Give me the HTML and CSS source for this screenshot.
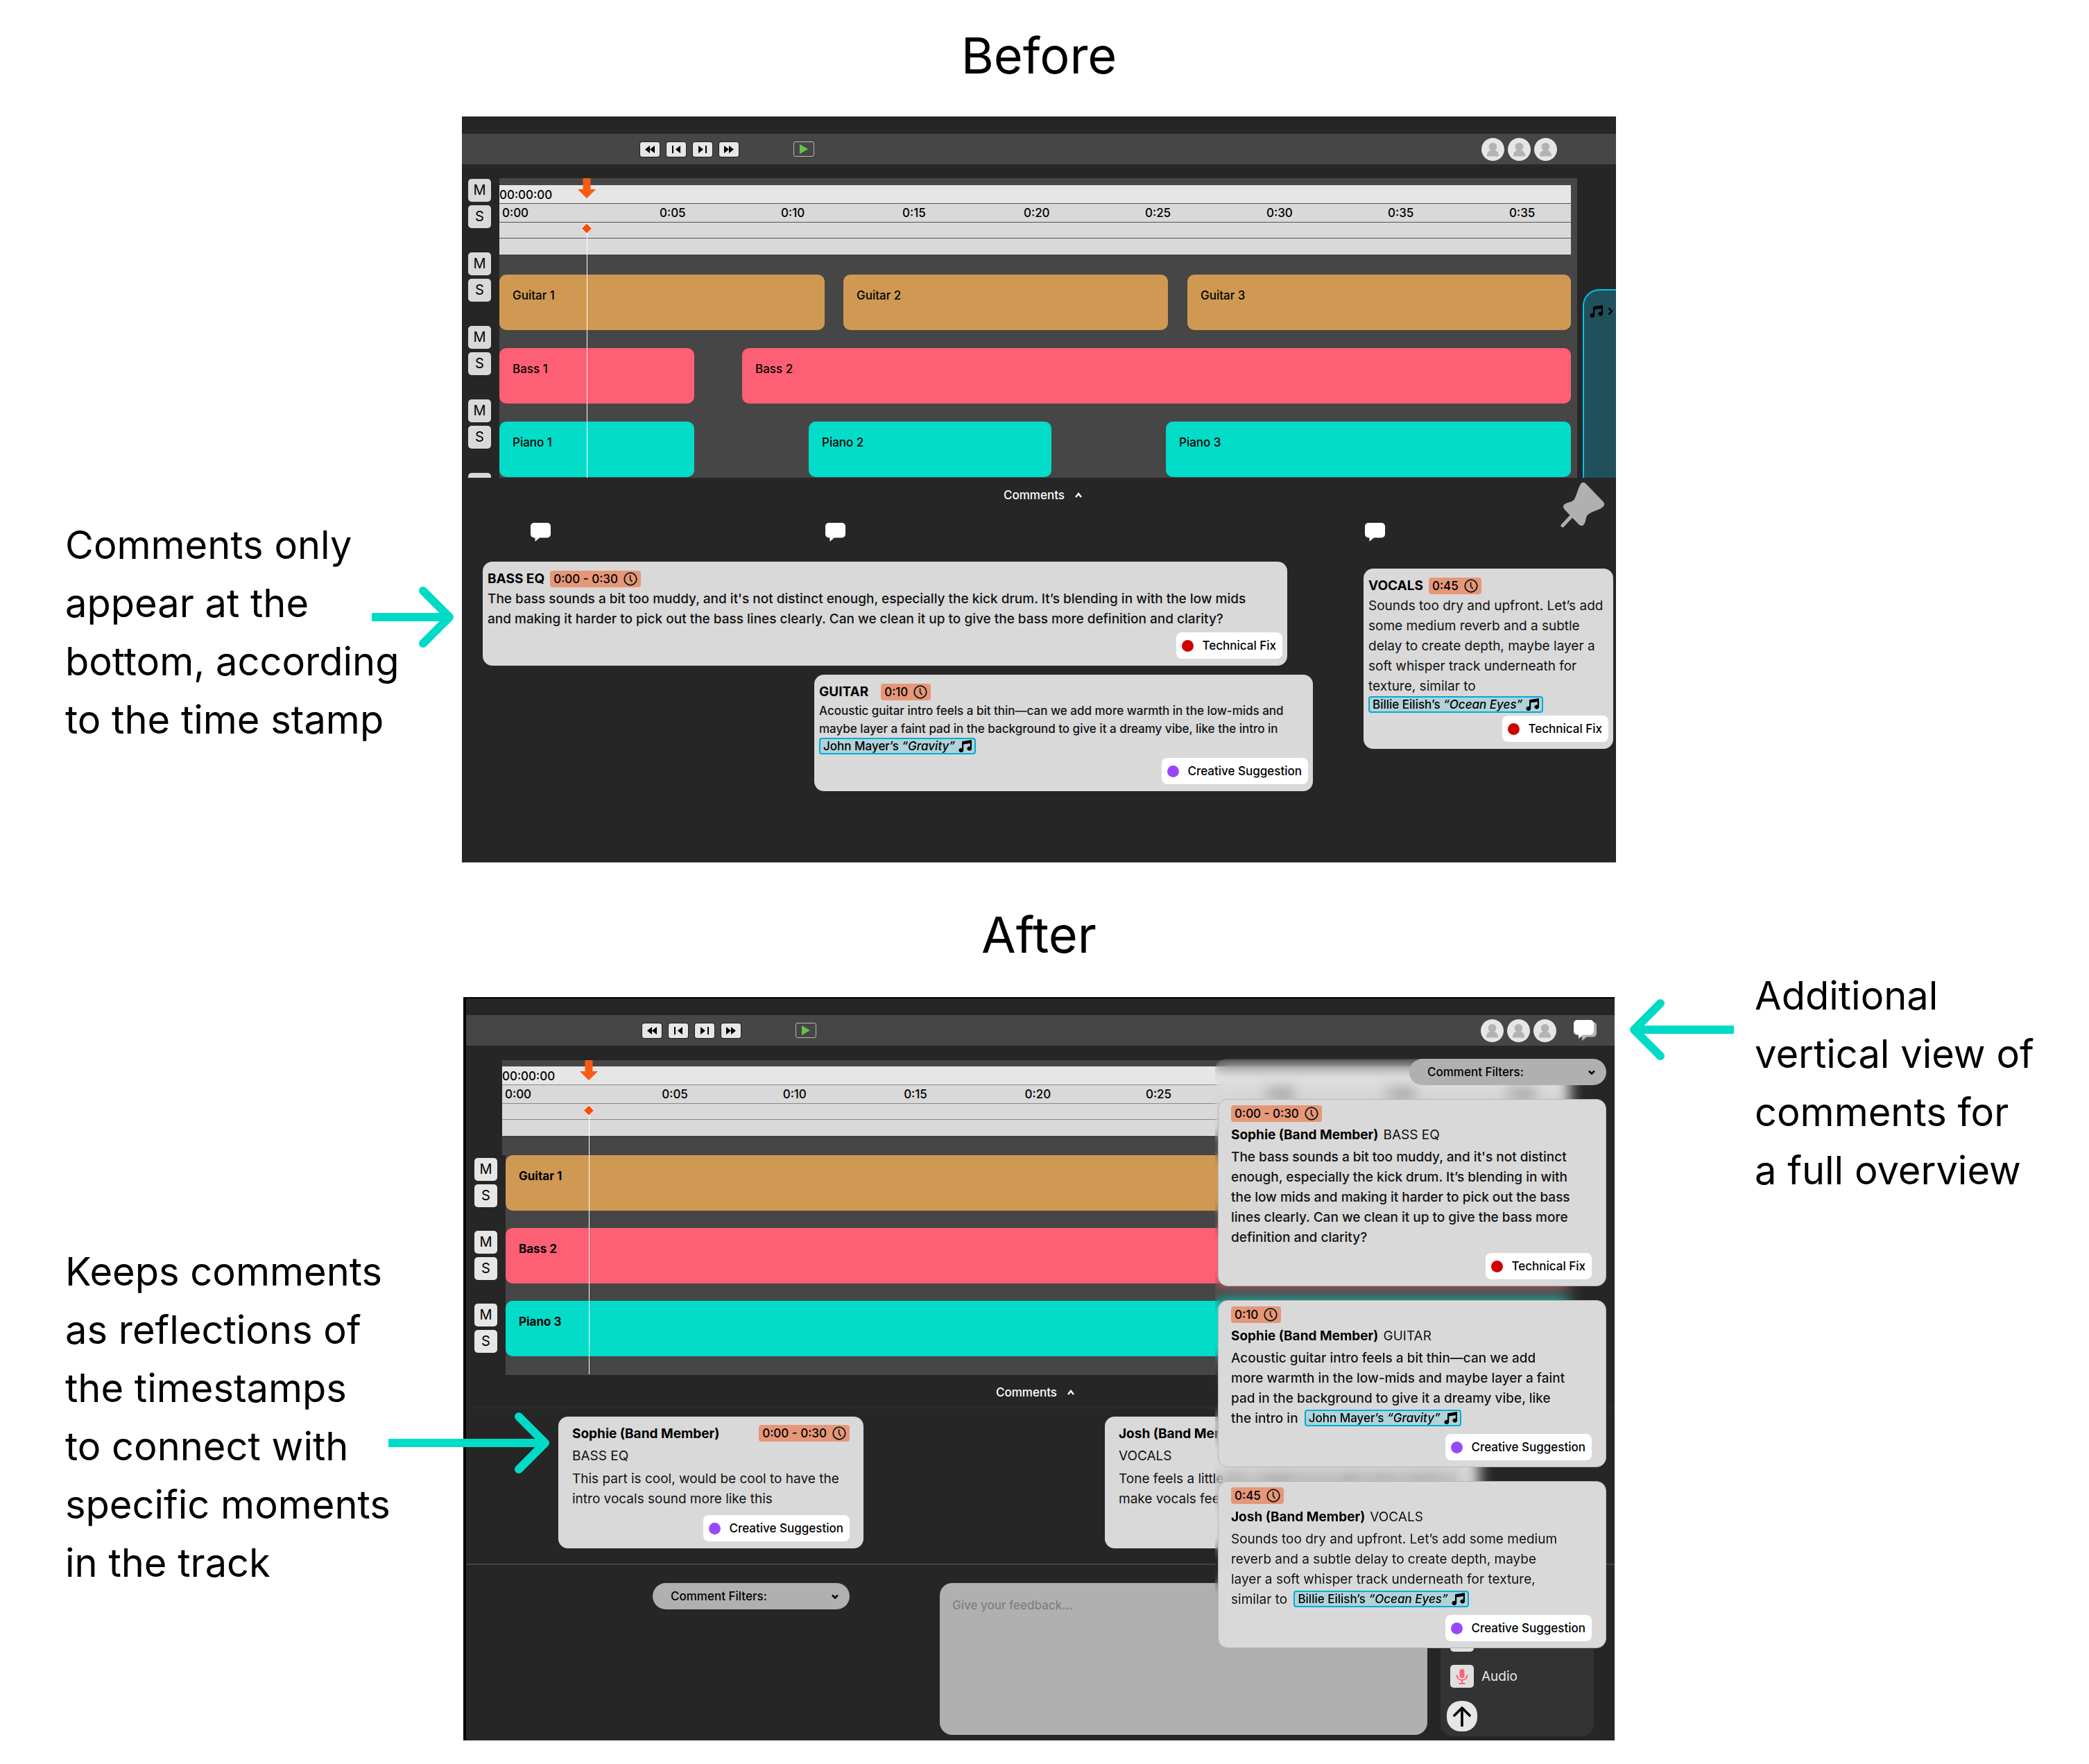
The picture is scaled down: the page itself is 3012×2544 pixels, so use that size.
FILE: index.html
```html
<!DOCTYPE html>
<html lang="en">
<head>
<meta charset="utf-8">
<meta name="viewport" content="width=device-width, initial-scale=1">
<title>Comments: before and after</title>
<link rel="stylesheet" href="styles.css">
</head>
<body>
<svg class="defs" aria-hidden="true">
  <symbol id="i-rewind" viewBox="0 0 28 21"><path d="M14 5v11L7 10.500zM21 5v11l-7-5.500z"/></symbol>
  <symbol id="i-prev" viewBox="0 0 28 21"><path d="M8 5h2v11H8zM20 5v11l-7-5.500z"/></symbol>
  <symbol id="i-next" viewBox="0 0 28 21"><path d="M18 5h2v11h-2zM8 5v11l7-5.500z"/></symbol>
  <symbol id="i-forward" viewBox="0 0 28 21"><path d="M7 5v11l7-5.500zM14 5v11l7-5.500z"/></symbol>
  <symbol id="i-play" viewBox="0 0 14 16"><path d="M1 1v14l12-7z"/></symbol>
  <symbol id="i-user" viewBox="0 0 33 33"><circle cx="16.500" cy="16.500" r="16.500" fill="#e6e6e6"/><path d="M16.500 7c3.400 0 5.800 2.400 5.800 5.600 0 2.400-.9 4.200-2.500 5.300 3.200.8 5.400 3.600 5.400 8.600H7.800c0-5 2.200-7.800 5.400-8.600-1.600-1.100-2.500-2.900-2.500-5.300C10.700 9.400 13.100 7 16.500 7z" fill="#b3b3b3"/></symbol>
  <symbol id="i-clock" viewBox="0 0 20 20"><circle cx="10" cy="10" r="8.800" fill="none" stroke="#111" stroke-width="1.800"/><path d="M9.600 4.500v6l3 3.600" fill="none" stroke="#111" stroke-width="1.700"/></symbol>
  <symbol id="i-note" viewBox="0 0 20 18"><path d="M6 2.200 20 0v12.600a3.300 3 0 1 1-2.200-2.800V4.900L8.200 6.400v8.400A3.400 3.100 0 1 1 6 12z"/></symbol>
  <symbol id="i-up" viewBox="0 0 12 10"><path d="M2 8l4-5 4 5" fill="none" stroke="currentColor" stroke-width="2.400"/></symbol>
  <symbol id="i-down" viewBox="0 0 12 10"><path d="M2 2.500l4 4 4-4" fill="none" stroke="currentColor" stroke-width="2.600"/></symbol>
  <symbol id="i-bubble" viewBox="0 0 29 27"><path d="M5 0h19a5 5 0 0 1 5 5v11.500a5 5 0 0 1-5 5H13L6.500 27v-5.500H5a5 5 0 0 1-5-5V5a5 5 0 0 1 5-5z"/></symbol>
  <symbol id="i-playhead" viewBox="0 0 26 80"><path d="M7.500 0h11v16H26L13 29 0 16h7.500z" fill="#fa5a14"/><path d="M13 65l7.500 7.500L13 80l-7.500-7.500z" fill="#fa4d0c" stroke="#fff" stroke-width="1"/></symbol>
</svg>

<main>
<section class="stage stage-before">
  <div class="side left">
    <p class="note">Comments only<br>appear at the<br>bottom, according<br>to the time stamp</p>
    <svg class="arrow" viewBox="0 0 118 88" aria-hidden="true"><path d="M0 44h110"/><path class="head" d="M74 6l38 38-38 38"/></svg>
  </div>
  <h2>Before</h2>
  <div class="panel">
    <header class="toolbar">
      <div class="transport">
        <button aria-label="Rewind"><svg><use href="#i-rewind"/></svg></button>
        <button aria-label="Previous"><svg><use href="#i-prev"/></svg></button>
        <button aria-label="Next"><svg><use href="#i-next"/></svg></button>
        <button aria-label="Forward"><svg><use href="#i-forward"/></svg></button>
      </div>
      <button class="play" aria-label="Play"><svg><use href="#i-play"/></svg></button>
      <div class="people">
        <svg><use href="#i-user"/></svg><svg><use href="#i-user"/></svg><svg><use href="#i-user"/></svg>
      </div>
    </header>
    <div class="tracks">
      <div class="controls">
        <div class="ms"><button>M</button><button>S</button></div>
        <div class="ms"><button>M</button><button>S</button></div>
        <div class="ms"><button>M</button><button>S</button></div>
        <div class="ms"><button>M</button><button>S</button></div>
        <div class="ms"><button aria-label="Mute"></button></div>
      </div>
      <div class="timeline">
        <div class="ruler">
          <div class="position">00:00:00</div>
          <div class="marks"><span>0:00</span><span>0:05</span><span>0:10</span><span>0:15</span><span>0:20</span><span>0:25</span><span>0:30</span><span>0:35</span><span>0:35</span></div>
          <div class="strip"></div>
          <div class="strip"></div>
        </div>
        <div class="lanes">
          <div class="lane guitar" style="grid-template-columns:469fr 27fr 468fr 28fr 553fr"><div class="clip">Guitar 1</div><i></i><div class="clip">Guitar 2</div><i></i><div class="clip">Guitar 3</div></div>
          <div class="lane bass" style="grid-template-columns:281fr 69fr 1195fr"><div class="clip">Bass 1</div><i></i><div class="clip">Bass 2</div></div>
          <div class="lane piano" style="grid-template-columns:281fr 165fr 350fr 165fr 584fr"><div class="clip">Piano 1</div><i></i><div class="clip">Piano 2</div><i></i><div class="clip">Piano 3</div></div>
        </div>
        <div class="playhead"><svg><use href="#i-playhead"/></svg></div>
      </div>
      <button class="library" aria-label="Open references"><svg class="song-icon"><use href="#i-note"/></svg><svg class="chev" viewBox="0 0 8 12"><path d="M1.500 1.500L6 6l-4.500 4.500" fill="none" stroke="#000" stroke-width="2.400"/></svg></button>
    </div>
    <div class="comments">
      <button class="toggle">Comments <svg><use href="#i-up"/></svg></button>
      <svg class="pin" viewBox="0 0 64 66" aria-hidden="true"><path d="M29 3c2-3 5-3 8 0l24 25c3 3 3 6-1 9-5 4-18 6-22 12-2 4-1 8-4 12-2 3-5 3-8 0L6 40c-3-4-3-7 2-9 4-2 9-2 12-6 3-6 6-17 9-22z" fill="#b0b0b0"/><path d="M3 63l16-17" stroke="#b0b0b0" stroke-width="5" stroke-linecap="round"/></svg>
      <div class="bubbles"><svg><use href="#i-bubble"/></svg><svg><use href="#i-bubble"/></svg><svg><use href="#i-bubble"/></svg></div>
      <div class="board">
        <div class="board-main">
          <article class="card compact first">
            <div class="card-head"><b>BASS EQ</b><span class="time">0:00 - 0:30 <svg><use href="#i-clock"/></svg></span></div>
            <p class="strong">The bass sounds a bit too muddy, and it's not distinct enough, especially the kick drum. It’s blending in with the low mids<br>and making it harder to pick out the bass lines clearly. Can we clean it up to give the bass more definition and clarity?</p>
            <span class="kind technical">Technical Fix</span>
          </article>
          <article class="card compact second">
            <div class="card-head"><b>GUITAR</b><span class="time">0:10 <svg><use href="#i-clock"/></svg></span></div>
            <p class="strong small">Acoustic guitar intro feels a bit thin—can we add more warmth in the low-mids and<br>maybe layer a faint pad in the background to give it a dreamy vibe, like the intro in</p>
            <a class="song" href="#">John Mayer’s <em>“Gravity”</em> <svg><use href="#i-note"/></svg></a>
            <span class="kind creative">Creative Suggestion</span>
          </article>
        </div>
        <article class="card compact third">
          <div class="card-head"><b>VOCALS</b><span class="time">0:45 <svg><use href="#i-clock"/></svg></span></div>
          <p>Sounds too dry and upfront. Let’s add<br>some medium reverb and a subtle<br>delay to create depth, maybe layer a<br>soft whisper track underneath for<br>texture, similar to</p>
          <a class="song" href="#">Billie Eilish’s <em>“Ocean Eyes”</em> <svg><use href="#i-note"/></svg></a>
          <span class="kind technical">Technical Fix</span>
        </article>
      </div>
    </div>
  </div>
</section>

<section class="stage stage-after">
  <div class="side left">
    <p class="note">Keeps comments<br>as reflections of<br>the timestamps<br>to connect with<br>specific moments<br>in the track</p>
    <svg class="arrow" viewBox="0 0 232 88" aria-hidden="true"><path d="M0 44h224"/><path class="head" d="M188 6l38 38-38 38"/></svg>
  </div>
  <h2>After</h2>
  <div class="panel">
    <header class="toolbar">
      <div class="transport">
        <button aria-label="Rewind"><svg><use href="#i-rewind"/></svg></button>
        <button aria-label="Previous"><svg><use href="#i-prev"/></svg></button>
        <button aria-label="Next"><svg><use href="#i-next"/></svg></button>
        <button aria-label="Forward"><svg><use href="#i-forward"/></svg></button>
      </div>
      <button class="play" aria-label="Play"><svg><use href="#i-play"/></svg></button>
      <div class="people">
        <svg><use href="#i-user"/></svg><svg><use href="#i-user"/></svg><svg><use href="#i-user"/></svg>
      </div>
      <button class="chat" aria-label="Show all comments"><svg viewBox="0 0 33 30"><path d="M9 3h19a5 5 0 0 1 5 5v11.500a5 5 0 0 1-5 5h-9L12 30v-5.500H9z" fill="#b3b3b3"/><path d="M5 0h19a5 5 0 0 1 5 5v11.500a5 5 0 0 1-5 5H13L7 27v-5.500H5a5 5 0 0 1-5-5V5a5 5 0 0 1 5-5z" fill="#fff"/></svg></button>
    </header>
    <div class="tracks">
      <div class="controls">
        <div class="ms"><button>M</button><button>S</button></div>
        <div class="ms"><button>M</button><button>S</button></div>
        <div class="ms"><button>M</button><button>S</button></div>
      </div>
      <div class="timeline">
        <div class="ruler">
          <div class="position">00:00:00</div>
          <div class="marks"><span>0:00</span><span>0:05</span><span>0:10</span><span>0:15</span><span>0:20</span><span>0:25</span><span>0:30</span><span>0:35</span><span>0:35</span></div>
          <div class="strip"></div>
          <div class="strip"></div>
        </div>
        <div class="lanes">
          <div class="lane guitar"><div class="clip">Guitar 1</div></div>
          <div class="lane bass"><div class="clip">Bass 2</div></div>
          <div class="lane piano"><div class="clip">Piano 3</div></div>
        </div>
        <div class="playhead"><svg><use href="#i-playhead"/></svg></div>
      </div>
    </div>
    <div class="comments">
      <button class="toggle">Comments <svg><use href="#i-up"/></svg></button>
      <div class="reflections">
        <article class="card roomy">
          <div class="card-head"><b>Sophie (Band Member)</b><span class="time">0:00 - 0:30 <svg><use href="#i-clock"/></svg></span></div>
          <div class="topic">BASS EQ</div>
          <p>This part is cool, would be cool to have the<br>intro vocals sound more like this</p>
          <span class="kind creative">Creative Suggestion</span>
        </article>
        <article class="card roomy wide">
          <div class="card-head"><b>Josh (Band Member)</b></div>
          <div class="topic">VOCALS</div>
          <p>Tone feels a little dry, maybe try to add some reverb to<br>make vocals feel fuller</p>
        </article>
      </div>
    </div>
    <form class="composer">
      <div class="filter"><select aria-label="Comment filters"><option>Comment Filters:</option></select><svg><use href="#i-down"/></svg></div>
      <textarea aria-label="Feedback" placeholder="Give your feedback..."></textarea>
      <div class="tools">
        <button type="button" class="tool" aria-label="Attach"><span class="tile"></span></button>
        <button type="button" class="tool"><span class="tile"><svg viewBox="0 0 18 22"><rect x="5.500" y="0" width="7" height="13" rx="3.500" fill="#fd5f74"/><path d="M1.500 8.500c0 10 15 10 15 0M9 16v4M4.500 21h9" fill="none" stroke="#fd5f74" stroke-width="2"/></svg></span>Audio</button>
        <button type="button" class="send" aria-label="Send"><svg viewBox="0 0 28 30"><path d="M14 29V3M3 14L14 3l11 11" fill="none" stroke="#000" stroke-width="3.600" stroke-linecap="round" stroke-linejoin="round"/></svg></button>
      </div>
    </form>
    <aside class="overview">
      <div class="filter"><select aria-label="Comment filters"><option>Comment Filters:</option></select><svg><use href="#i-down"/></svg></div>
      <article class="card listed">
        <span class="time">0:00 - 0:30 <svg><use href="#i-clock"/></svg></span>
        <div class="card-head"><b>Sophie (Band Member)</b> BASS EQ</div>
        <p class="strong">The bass sounds a bit too muddy, and it's not distinct<br>enough, especially the kick drum. It’s blending in with<br>the low mids and making it harder to pick out the bass<br>lines clearly. Can we clean it up to give the bass more<br>definition and clarity?</p>
        <span class="kind technical">Technical Fix</span>
      </article>
      <article class="card listed">
        <span class="time">0:10 <svg><use href="#i-clock"/></svg></span>
        <div class="card-head"><b>Sophie (Band Member)</b> GUITAR</div>
        <p class="strong">Acoustic guitar intro feels a bit thin—can we add<br>more warmth in the low-mids and maybe layer a faint<br>pad in the background to give it a dreamy vibe, like<br>the intro in <a class="song" href="#">John Mayer’s <em>“Gravity”</em> <svg><use href="#i-note"/></svg></a></p>
        <span class="kind creative">Creative Suggestion</span>
      </article>
      <article class="card listed">
        <span class="time">0:45 <svg><use href="#i-clock"/></svg></span>
        <div class="card-head"><b>Josh (Band Member)</b> VOCALS</div>
        <p>Sounds too dry and upfront. Let’s add some medium<br>reverb and a subtle delay to create depth, maybe<br>layer a soft whisper track underneath for texture,<br>similar to <a class="song" href="#">Billie Eilish’s <em>“Ocean Eyes”</em> <svg><use href="#i-note"/></svg></a></p>
        <span class="kind creative">Creative Suggestion</span>
      </article>
    </aside>
  </div>
  <div class="side right">
    <svg class="arrow" viewBox="0 0 150 88" aria-hidden="true"><path d="M150 44H8"/><path class="head" d="M44 6L6 44l38 38"/></svg>
    <p class="note">Additional<br>vertical view of<br>comments for<br>a full overview</p>
  </div>
</section>
</main>
</body>
</html>
```
FILE: styles.css
```css
* { box-sizing: border-box; }
body {
  margin: 0;
  background: #fff;
  color: #000;
  font-family: Inter, "Liberation Sans", sans-serif;
  font-size: 17px;
  line-height: 24px;
}
button, select, textarea { font: inherit; color: inherit; margin: 0; border: 0; padding: 0; }
svg { display: block; flex: none; }
p, h2 { margin: 0; }
.defs { position: absolute; width: 0; height: 0; }

/* Page: note | panel | note */
.stage { display: grid; grid-template-rows: auto auto; }
.stage-before { grid-template-columns: 666fr 1664fr 682fr; }
.stage-after { grid-template-columns: 668fr 1660fr 684fr; }
.stage h2 {
  grid-area: 1 / 2;
  padding: 38px 0 46px;
  text-align: center;
  font-size: 72px;
  line-height: 84px;
  font-weight: 400;
}
.stage-after h2 { padding: 62px 0 48px; }
.stage .panel { grid-area: 2 / 2; min-width: 0; }
.side { position: relative; z-index: 1; font-size: 56px; line-height: 84px; white-space: nowrap; }
.side.left { grid-area: 1 / 1 / 3 / 2; padding-left: 94px; }
.side.right { grid-area: 1 / 3 / 3 / 4; padding: 150px 0 0 202px; }
.stage-before .left { padding-top: 744px; }
.stage-after .left { padding-top: 548px; }
.arrow {
  position: absolute;
  height: 88px;
  fill: none;
  stroke: #00dbc7;
  stroke-width: 12px;
  stroke-linejoin: round;
}
.arrow .head { stroke-linecap: round; }
.stage-before .arrow { right: 12px; top: 846px; width: 118px; }
.stage-after .left .arrow { right: -124px; top: 793px; width: 232px; }
.right .arrow { left: 22px; top: 197px; width: 150px; }

/* Panel frame */
.panel {
  position: relative;
  display: flex;
  flex-direction: column;
  background: #262626;
  padding-top: 25px;
  overflow: hidden;
  font-weight: 500;
  font-optical-sizing: none;
}
.stage-before .panel { border-bottom: 1px solid #555; }
.stage-after .panel { border-left: 4px solid #000; border-top: 2px solid #000; padding-top: 24px; }

/* Toolbar */
.toolbar { display: flex; align-items: center; height: 44px; background: #464646; padding: 0 85px 0 257px; }
.stage-after .toolbar { padding: 0 26px 0 254px; }
.transport { display: flex; gap: 10px; }
.transport button { width: 28px; height: 21px; background: #e6e6e6; border-radius: 3px; box-shadow: 0 0 0 1px #222; }
.transport svg { width: 28px; height: 21px; }
.play { display: grid; place-items: center; width: 30px; height: 22px; margin-left: 79px; background: none; border: 1px solid #b8b8b8; border-radius: 3px; }
.play svg { width: 14px; height: 16px; fill: #6cc04a; }
.people { display: flex; gap: 5px; margin-left: auto; }
.people svg { width: 33px; height: 33px; }
.chat { margin-left: 25px; background: none; }
.chat svg { width: 33px; height: 30px; }

/* Tracks */
.tracks { display: grid; grid-template-columns: 54px 1fr 56px; height: 452px; padding-top: 20px; overflow: hidden; }
.stage-after .tracks { grid-template-columns: 52px 1fr; height: 475px; padding: 21px 64px 0 0; }
.controls { display: flex; flex-direction: column; gap: 35px; padding: 1px 0 0 9px; }
.stage-after .controls { gap: 34px; padding: 141px 0 0 12px; }
.ms { display: flex; flex-direction: column; gap: 5px; }
.ms button { width: 33px; height: 33px; background: #d9d9d9; border-radius: 5px; font-size: 20px; font-weight: 400; line-height: 33px; text-align: center; }
.stage-after .ms button { background: #e6e6e6; }
.timeline { position: relative; background: #464646; padding: 10px 9px 0 0; height: 432px; }
.stage-after .timeline { padding: 9px 0 0; height: 454px; border-bottom: 1px solid #48487c; }
.ruler { background: #d9d9d9; border-bottom: 1px solid #eee; }
.ruler > div + div { border-top: 1px solid #555; }
.stage-after .ruler > div + div { border-top-color: #888; }
.position { height: 26px; line-height: 28px; background: #e6e6e6; }
.marks { display: grid; grid-template-columns: 227fr repeat(7, 175fr) 89fr; height: 27px; line-height: 27px; padding-left: 4px; }
.strip { height: 23px; }
.lanes { display: flex; flex-direction: column; gap: 26px; margin-top: 29px; }
.stage-after .lanes { gap: 25px; margin-top: 28px; padding-bottom: 27px; border-left: 5px solid #262626; background: #464646; }
.lane { display: grid; height: 80px; }
.clip { min-width: 0; padding: 18px 0 0 19px; border-radius: 10px; }
.stage-after .clip { font-weight: 700; }
.guitar .clip { background: #d09953; }
.bass .clip { background: #fd5f74; }
.piano .clip { background: #03dcc8; }
.playhead { position: absolute; top: 0; bottom: 0; left: 113px; width: 26px; }
.stage-after .playhead { left: 112px; }
.playhead::after { content: ""; position: absolute; left: 13px; top: 79px; bottom: 0; width: 1px; background: #fff; }
.playhead svg { width: 26px; height: 80px; }
.library { display: flex; align-items: flex-start; gap: 7px; margin: 160px 0 0 8px; padding: 21px 0 0 7px; background: #20505c; border: solid #00c0e8; border-width: 2px 0 0 2px; border-radius: 24px 0 0 0; }
.song-icon { width: 20px; height: 18px; }
.chev { width: 8px; height: 12px; margin-top: 3px; }

/* Comments */
.comments { position: relative; background: #262626; }
.stage-before .comments { height: 554px; }
.stage-after .comments { height: 274px; border-bottom: 2px solid #444; }
.toggle { display: flex; align-items: center; gap: 14px; height: 24px; margin: 13px auto 0; padding-left: 12px; background: none; color: #fff; }
.stage-after .toggle { padding: 0 14px 0 0; }
.toggle svg { width: 12px; height: 10px; }
.pin { position: absolute; right: 16px; top: 6px; width: 64px; height: 66px; }
.bubbles { display: grid; grid-template-columns: 425fr 778fr 362fr; padding-left: 99px; margin-top: 28px; }
.bubbles svg { width: 29px; height: 27px; fill: #fff; }
.board { display: flex; align-items: flex-start; gap: 73px; padding: 29px 4px 0 30px; }
.board-main { flex: 1; min-width: 0; display: flex; flex-direction: column; gap: 13px; }
.card {
  position: relative;
  display: flex;
  flex-direction: column;
  align-items: flex-start;
  background: #d9d9d9;
  border-radius: 14px;
  font-size: 19px;
  line-height: 29px;
  font-weight: 400;
  color: #111;
  white-space: nowrap;
}
.card b { font-weight: 700; color: #000; }
.card .strong { font-weight: 500; }
.card .small { font-size: 17px; line-height: 26px; }
.card-head { display: flex; align-items: center; gap: 8px; }
.compact { padding: 10px 7px; }
.first { margin-right: 37px; height: 150px; }
.second { margin-left: 478px; height: 168px; }
.third { flex: none; width: 360px; height: 260px; margin-top: 10px; }
.second .card-head { gap: 18px; }
.time { display: inline-flex; align-items: center; gap: 8px; height: 24px; padding: 0 5px; border-radius: 4px; background: #e59778; font-size: 17px; line-height: 24px; font-weight: 500; color: #000; }
.time svg { width: 20px; height: 20px; }
.song {
  display: inline-flex;
  align-items: center;
  height: 24px;
  padding: 0 4px;
  border: 2px solid #00acd8;
  border-radius: 4px;
  background: #b0d3da;
  color: #000;
  font-size: 17px;
  line-height: 20px;
  font-weight: 500;
  text-decoration: none;
  white-space: pre;
}
.song svg { width: 20px; height: 18px; margin-left: 4px; }
.kind { display: flex; align-items: center; gap: 12px; height: 38px; margin-top: auto; align-self: flex-end; padding: 0 9px 0 8px; background: #fff; border-radius: 8px; font-size: 17px; font-weight: 500; color: #000; }
.kind::before { content: ""; width: 17px; height: 17px; border-radius: 50%; background: #d00000; }
.creative::before { background: #9747ff; }

/* Reflections below the tracks */
.reflections { display: flex; gap: 348px; margin-top: 10px; border-top: 1px solid #2e2e3a; padding: 12px 195px 0 133px; }
.roomy { width: 440px; height: 190px; padding: 9px 20px 10px; }
.roomy .card-head { align-self: stretch; justify-content: space-between; height: 30px; }
.roomy .topic { height: 36px; line-height: 36px; }
.wide { flex: 1; width: auto; }

/* Composer */
.composer { display: grid; grid-template-columns: 284px 1fr 221px; padding: 26px 30px 6px 269px; }
.filter { position: relative; width: 284px; height: 38px; }
.filter select { appearance: none; width: 100%; height: 100%; padding-left: 26px; border-radius: 19px; background: #b0b0b0; }
.filter svg { position: absolute; right: 15px; top: 15px; width: 12px; height: 10px; pointer-events: none; }
.composer textarea { height: 219px; margin: 0 19px 0 130px; padding: 20px 18px; border-radius: 18px; background: #b0b0b0; resize: none; }
.composer textarea::placeholder { color: #808080; opacity: 1; }
.tools { display: flex; flex-direction: column; align-items: flex-start; background: #333; border-radius: 18px; padding: 66px 0 7px 14px; }
.tool { display: flex; align-items: center; gap: 11px; margin-bottom: 19px; background: none; color: #e6e6e6; font-size: 19px; font-weight: 400; }
.tile { display: grid; place-items: center; width: 34px; height: 33px; background: #e0e0e0; border-radius: 5px; }
.tile svg { width: 18px; height: 22px; }
.send { display: grid; place-items: center; width: 44px; height: 44px; margin: auto 0 0 -5px; border-radius: 20px; background: #e6e6e6; }
.send svg { width: 28px; height: 30px; }

/* Vertical overview, laid over the tracks */
.overview { position: absolute; top: 87px; right: 12px; width: 564px; display: flex; flex-direction: column; gap: 20px; padding-left: 4px; border-radius: 16px; backdrop-filter: blur(10px); }
.overview .filter { align-self: flex-end; }
.listed { padding: 8px 20px 9px 18px; border: 1px solid #b4b4b4; }
.listed .card-head { height: 36px; gap: 7px; }
.listed .kind { margin-top: 8px; }
.listed p .song { margin: 2px 0 0 4px; vertical-align: top; }
```
